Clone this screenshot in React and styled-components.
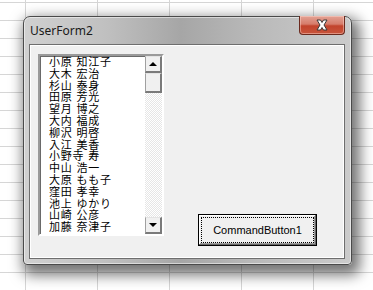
import React from "react";
import styled, { createGlobalStyle } from "styled-components";

const GlobalStyle = createGlobalStyle`
  html, body { margin: 0; padding: 0; }
  body {
    width: 373px;
    height: 290px;
    overflow: hidden;
    background-color: #ffffff;
    background-image:
      linear-gradient(to right, #d6d6d6 1px, transparent 1px),
      linear-gradient(to bottom, #d6d6d6 1px, transparent 1px);
    background-size: 72px 18px, 72px 18px;
    background-position: 25px 2px, 25px 2px;
    font-family: "Noto Sans", sans-serif;
  }
`;

const Page = styled.div`
  padding: 16px 0 0 23px;
`;

const Window = styled.div`
  width: 329px;
  height: 249px;
  box-sizing: border-box;
  border: 1px solid #4a4a4a;
  border-radius: 7px 7px 4px 4px;
  background: linear-gradient(
    to right,
    #d0d0d0 0%,
    #c0c0c0 25%,
    #a6a6a6 48%,
    #b9b9b9 70%,
    #cbcbcb 100%
  );
  box-shadow: 0 0 0 1px rgba(255, 255, 255, 0.5) inset,
    4px 6px 14px 4px rgba(0, 0, 0, 0.55);
  display: flex;
  flex-direction: column;
`;

const TitleBar = styled.div`
  height: 27px;
  display: flex;
  justify-content: space-between;
  align-items: flex-start;
  padding-left: 6px;
`;

const Title = styled.span`
  margin-top: 5px;
  font-family: "Noto Sans", sans-serif;
  font-size: 12px;
  color: #1a1a1a;
`;

const CloseButton = styled.div`
  width: 46px;
  height: 19px;
  margin-right: 6px;
  margin-top: -1px;
  box-sizing: border-box;
  border: 1px solid #6b2a1e;
  border-top: none;
  border-radius: 0 0 4px 4px;
  background: linear-gradient(to bottom, #e3a294 0%, #d67c6b 45%, #c2432c 55%, #c8553c 100%);
  box-shadow: inset 0 0 0 1px rgba(255, 220, 210, 0.45);
  display: flex;
  align-items: center;
  justify-content: center;
`;

const Client = styled.div`
  flex: 1;
  margin: 0 6px 5px 5px;
  border: 1px solid #6e6e6e;
  box-shadow: inset 0 0 0 1px #ffffff;
  background: #f0f0f0;
  padding: 9px 0 0 8px;
  display: flex;
  align-items: flex-start;
`;

const ListBox = styled.div`
  width: 126px;
  height: 182px;
  box-sizing: border-box;
  border-style: solid;
  border-width: 2px;
  border-color: #9a9a9a #ffffff #ffffff #9a9a9a;
  box-shadow: inset 1px 1px 0 #6a6a6a;
  background: #ffffff;
  display: flex;
`;

const Items = styled.ul`
  flex: 1;
  margin: 0;
  padding: 0 0 0 9px;
  list-style: none;
  overflow: hidden;
`;

const Item = styled.li`
  height: 11.8px;
  line-height: 11.8px;
  font-family: "Noto Sans CJK JP", sans-serif;
  font-size: 11px;
  letter-spacing: 0.7px;
  word-spacing: 1px;
  color: #000;
  white-space: pre;
`;

const ScrollBar = styled.div`
  width: 17px;
  display: flex;
  flex-direction: column;
  background: repeating-conic-gradient(#ffffff 0 25%, #e6e6e6 0 50%) 0 0 / 2px 2px;
`;

const ArrowButton = styled.div`
  height: 17px;
  box-sizing: border-box;
  background: #f0f0f0;
  border-style: solid;
  border-width: 1px 2px 2px 1px;
  border-color: #e3e3e3 #7a7a7a #7a7a7a #a0a0a0;
  display: flex;
  align-items: center;
  justify-content: center;
`;

const Thumb = styled.div`
  height: 20px;
  box-sizing: border-box;
  background: #f0f0f0;
  border-style: solid;
  border-width: 1px 2px 2px 1px;
  border-color: #e3e3e3 #7a7a7a #7a7a7a #a0a0a0;
`;

const Track = styled.div`
  flex: 1;
`;

const Triangle = styled.div`
  width: 0;
  height: 0;
  border-left: 4px solid transparent;
  border-right: 4px solid transparent;
  ${(p) => (p.$down ? "border-top: 4px solid #000;" : "border-bottom: 4px solid #000;")}
`;

const CommandButton = styled.button`
  margin: 160px 0 0 34px;
  width: 119px;
  height: 32px;
  padding: 2px;
  box-sizing: border-box;
  border: 1px solid #000;
  background: #f0f0f0;
  box-shadow: inset -1px -1px 0 #696969, inset 1px 1px 0 #ffffff, inset -2px -2px 0 #a0a0a0;
  display: flex;
  cursor: default;
`;

const FocusRect = styled.span`
  flex: 1;
  border: 1px dotted #000;
  display: flex;
  align-items: center;
  justify-content: center;
  font-family: "Liberation Sans", Arial, sans-serif;
  font-size: 11px;
  color: #000;
`;

const names = [
  "小原 知江子",
  "大木 宏治",
  "杉山 泰身",
  "田原 芳光",
  "望月 博之",
  "大内 福成",
  "柳沢 明啓",
  "入江 美香",
  "小野寺 寿",
  "中山 浩一",
  "大原 もも子",
  "窪田 孝幸",
  "池上 ゆかり",
  "山崎 公彦",
  "加藤 奈津子",
];

export default function App() {
  return (
    <>
      <GlobalStyle />
      <Page>
        <Window>
          <TitleBar>
            <Title>UserForm2</Title>
            <CloseButton>
              <svg width="16" height="12" viewBox="0 0 16 12">
                <path
                  d="M3 1 L6.5 1 L8 3.5 L9.5 1 L13 1 L10 6 L13 11 L9.5 11 L8 8.5 L6.5 11 L3 11 L6 6 Z"
                  fill="#ffffff"
                  stroke="#3a3a3a"
                  strokeWidth="1"
                  strokeLinejoin="round"
                />
              </svg>
            </CloseButton>
          </TitleBar>
          <Client>
            <ListBox>
              <Items>
                {names.map((n) => (
                  <Item key={n}>{n}</Item>
                ))}
              </Items>
              <ScrollBar>
                <ArrowButton>
                  <Triangle />
                </ArrowButton>
                <Thumb />
                <Track />
                <ArrowButton>
                  <Triangle $down />
                </ArrowButton>
              </ScrollBar>
            </ListBox>
            <CommandButton>
              <FocusRect>CommandButton1</FocusRect>
            </CommandButton>
          </Client>
        </Window>
      </Page>
    </>
  );
}
